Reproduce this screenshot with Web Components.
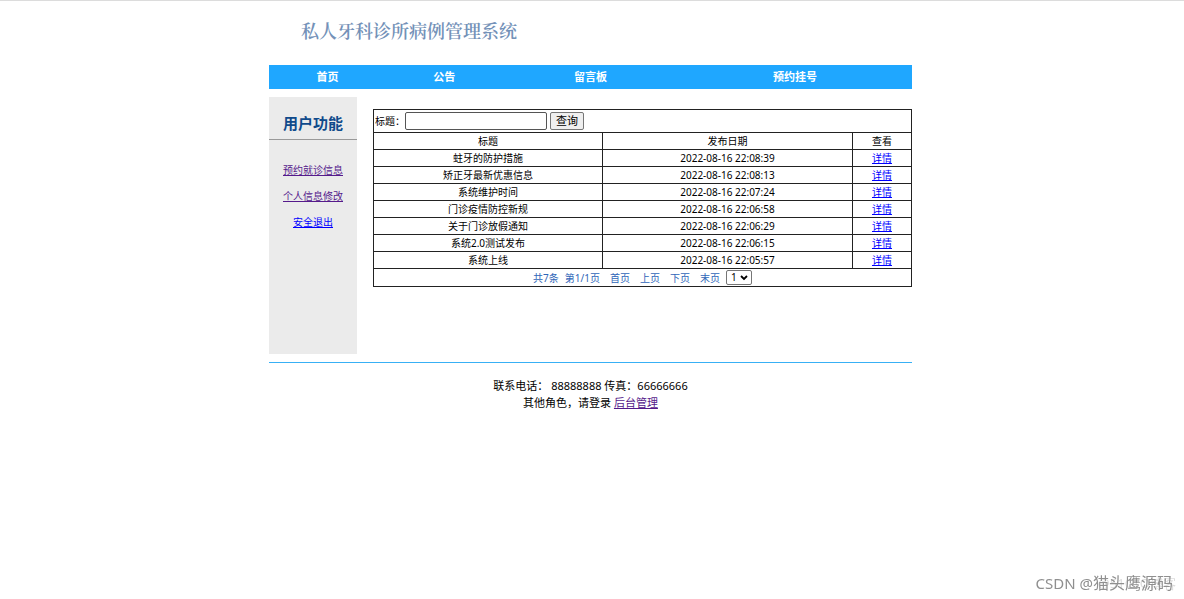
<!DOCTYPE html>
<html lang="zh-CN">
<head>
<meta charset="utf-8">
<meta name="viewport" content="width=device-width, initial-scale=1">
<title>私人牙科诊所病例管理系统</title>
<style>
  body {
    margin: 0;
    padding-right: 3px;
    background: #fff;
    color: #000;
    font: 10px/16px "Noto Sans", "Noto Sans CJK SC", sans-serif;
  }
</style>
</head>
<body>
<clinic-page>
  <clinic-header slot="header">私人牙科诊所病例管理系统</clinic-header>
  <clinic-nav slot="nav">
    <a href="#home">首页</a>
    <a href="#notice">公告</a>
    <a href="#board">留言板</a>
    <a href="#booking">预约挂号</a>
  </clinic-nav>
  <side-menu slot="side" heading="用户功能">
    <a href="#appointments" class="visited">预约就诊信息</a>
    <a href="#profile" class="visited">个人信息修改</a>
    <a href="#logout">安全退出</a>
  </side-menu>
  <notice-table></notice-table>
  <clinic-footer slot="footer">
    <span>联系电话： 88888888 传真：66666666</span>
    <span slot="admin">其他角色，请登录 <a href="#admin" style="color:#551a8b">后台管理</a></span>
  </clinic-footer>
</clinic-page>
<corner-mark></corner-mark>

<script>
const define = (name, markup, setup) => {
  const template = document.createElement('template');
  template.innerHTML = markup;
  customElements.define(name, class extends HTMLElement {
    constructor() {
      super();
      this.attachShadow({ mode: 'open' }).append(template.content.cloneNode(true));
    }
    connectedCallback() {
      if (setup) setup(this, this.shadowRoot);
    }
  });
};

define('clinic-page', `
  <style>
    :host { display: block; }
    .top { height: 1px; margin-right: -3px; background: #dcdcdc; }
    .page { max-width: 643px; margin: 0 auto; }
    .body { display: grid; grid-template-columns: 88px minmax(0, 1fr); gap: 16px; margin: 8px 0; }
    .main { padding-top: 12px; }
  </style>
  <div class="top"></div>
  <div class="page">
    <slot name="header"></slot>
    <slot name="nav"></slot>
    <div class="body">
      <slot name="side"></slot>
      <main class="main"><slot></slot></main>
    </div>
    <slot name="footer"></slot>
  </div>`);

define('clinic-header', `
  <style>
    :host { display: block; padding: 15px 32px 21px; }
    h1 { margin: 0; font: 600 18px/28px "Noto Serif CJK SC", "Noto Sans CJK SC", serif; color: #7391b8; }
  </style>
  <h1><slot></slot></h1>`);

define('clinic-nav', `
  <style>
    :host { display: block; background: #1fa7ff; }
    nav { display: grid; grid-template-columns: 2fr 2fr 3fr 4fr; text-align: center; }
    ::slotted(a) { color: #fff; font-size: 11px; font-weight: bold; line-height: 24px; text-decoration: none; }
  </style>
  <nav><slot></slot></nav>`);

define('side-menu', `
  <style>
    :host { display: block; min-height: 257px; background: #ebebeb; text-align: center; }
    h2 { margin: 0; padding: 14px 0 4px; border-bottom: 1px solid #999; color: #104a8b; font-size: 15px; line-height: 24px; }
    nav { display: flex; flex-direction: column; align-items: center; gap: 10px; padding-top: 22px; }
    ::slotted(a) { color: #00f; }
    ::slotted(a.visited) { color: #551a8b; }
  </style>
  <h2></h2>
  <nav><slot></slot></nav>`,
  (host, root) => { root.querySelector('h2').textContent = host.getAttribute('heading'); });

define('notice-table', `
  <style>
    :host { display: block; }
    table { width: 100%; border-collapse: collapse; table-layout: fixed; text-align: center; }
    col.title { width: 229px; }
    col.view { width: 59px; }
    th, td { padding: 0; border: 1px solid #222; font-weight: normal; }
    td a { color: #00f; }
    form { display: flex; align-items: center; height: 22px; padding: 0 1px; }
    input { box-sizing: border-box; width: 142px; height: 18px; margin: 0 3px 0 0; padding: 0 2px; border: 1px solid #555; border-radius: 2px; font: inherit; }
    button { box-sizing: border-box; width: 34px; height: 18px; padding: 0; border: 1px solid #767676; border-radius: 2px; background: #efefef; font: 11px/14px "Noto Sans", "Noto Sans CJK SC", sans-serif; }
    .pager { display: flex; align-items: center; justify-content: center; gap: 10px; height: 17px; color: #2f66b8; }
    .pager div { display: flex; align-items: center; gap: 6px; }
    .pager a { color: inherit; text-decoration: none; }
    .pick { position: relative; }
    select { display: block; box-sizing: border-box; width: 26px; height: 15px; padding: 0 0 0 4px; border: 1px solid #767676; border-radius: 2px; background: #fff; color: #000; font: inherit; line-height: 13px; appearance: none; }
    svg { position: absolute; right: 4px; top: 5px; width: 8px; height: 6px; pointer-events: none; }
  </style>
  <table>
    <colgroup><col class="title"><col><col class="view"></colgroup>
    <thead>
      <tr><td colspan="3"><form><label for="q">标题：</label><input id="q" type="text"><button type="button">查询</button></form></td></tr>
      <tr><th>标题</th><th>发布日期</th><th>查看</th></tr>
    </thead>
    <tbody></tbody>
    <tfoot>
      <tr><td colspan="3">
        <div class="pager">
          <div><span>共7条</span><span>第1/1页</span></div>
          <a href="#first">首页</a><a href="#prev">上页</a><a href="#next">下页</a>
          <div><a href="#last">末页</a>
            <span class="pick"><select aria-label="页码"><option>1</option></select><svg viewBox="0 0 8 6"><path d="M1 1l3 3 3-3" fill="none" stroke="#000" stroke-width="1.8"/></svg></span>
          </div>
        </div>
      </td></tr>
    </tfoot>
  </table>`,
  (host, root) => {
    const notices = [
      ['蛀牙的防护措施', '2022-08-16 22:08:39'],
      ['矫正牙最新优惠信息', '2022-08-16 22:08:13'],
      ['系统维护时间', '2022-08-16 22:07:24'],
      ['门诊疫情防控新规', '2022-08-16 22:06:58'],
      ['关于门诊放假通知', '2022-08-16 22:06:29'],
      ['系统2.0测试发布', '2022-08-16 22:06:15'],
      ['系统上线', '2022-08-16 22:05:57']
    ];
    root.querySelector('tbody').innerHTML = notices.map(([title, date], i) =>
      `<tr><td>${title}</td><td>${date}</td><td><a href="#notice-${i + 1}">详情</a></td></tr>`).join('');
  });

define('clinic-footer', `
  <style>
    :host { display: block; padding-top: 14px; border-top: 1px solid #38b0f5; text-align: center; font-size: 11px; line-height: 17px; }
    p { margin: 0; }
  </style>
  <p><slot></slot></p>
  <p><slot name="admin"></slot></p>`);

define('corner-mark', `
  <style>
    :host { position: fixed; right: 11px; bottom: 4px; color: #8f8f8f; font-size: 16px; line-height: 24px; white-space: nowrap; }
    .latin { font-size: 15px; }
    .under { position: absolute; right: -3px; top: 0; z-index: -1; color: #ddd; font-size: 13px; }
  </style>
  <span class="under">@51CTO博客</span><span class="latin">CSDN @</span>猫头鹰源码`);
</script>
</body>
</html>
